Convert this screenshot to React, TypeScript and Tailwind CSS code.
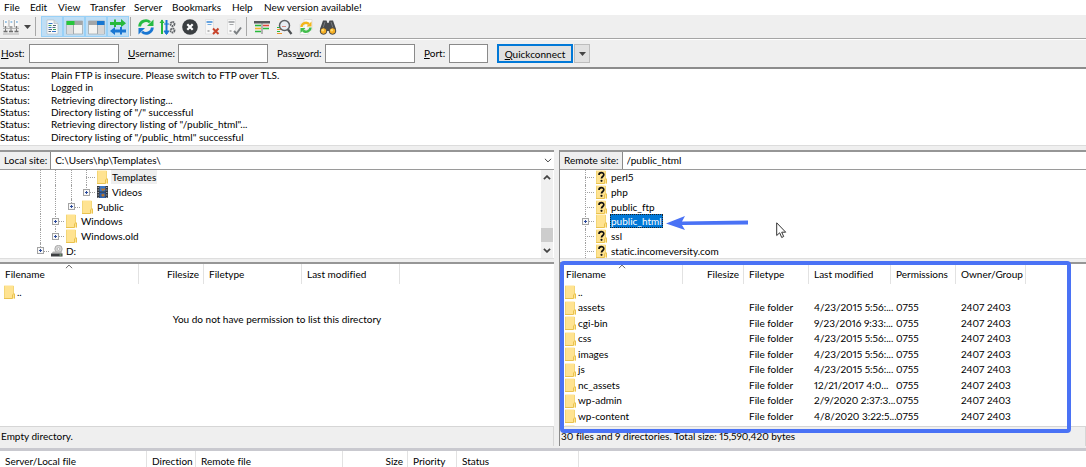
import { type ReactNode } from "react";
import clsx from "clsx";

const LOG_LINES = [
  "Plain FTP is insecure. Please switch to FTP over TLS.",
  "Logged in",
  "Retrieving directory listing...",
  'Directory listing of "/" successful',
  'Retrieving directory listing of "/public_html"...',
  'Directory listing of "/public_html" successful',
];

const REMOTE_FILES = [
  { name: "assets", modified: "4/23/2015 5:56:..." },
  { name: "cgi-bin", modified: "9/23/2016 9:33:..." },
  { name: "css", modified: "4/23/2015 5:56:..." },
  { name: "images", modified: "4/23/2015 5:56:..." },
  { name: "js", modified: "4/23/2015 5:56:..." },
  { name: "nc_assets", modified: "12/21/2017 4:0..." },
  { name: "wp-admin", modified: "2/9/2020 2:37:3..." },
  { name: "wp-content", modified: "4/8/2020 3:22:5..." },
];

/* ---------- icons ---------- */

function FolderIcon({ unknown = false }: { unknown?: boolean }) {
  return (
    <svg width="11" height="14" viewBox="0 0 11 14" className="shrink-0">
      <path d="M0 .5h9.500v8.500h1.500v4.500H0z" fill="#ffe391" />
      <path d="M.5 1v12M9.500 1v8" stroke="#f3d677" fill="none" />
      <path d="M0 13.500h8.500V10l1.500-1.500.5.500v4.500" stroke="#e9c24f" fill="none" />
      {unknown && (
        <g>
          <path
            d="M3 5c0-3 4.800-3 4.800-.3C7.800 6.500 5.500 6.500 5.500 8.600"
            stroke="#111"
            strokeWidth="1.700"
            fill="none"
          />
          <circle cx="5.500" cy="10.800" r="1.100" fill="#111" />
        </g>
      )}
    </svg>
  );
}

function VideosIcon() {
  return (
    <svg width="11" height="12" viewBox="0 0 11 12" className="shrink-0">
      <path d="M0 0h11v12H0z" fill="#33363d" />
      <path d="M2.500 0h6v5.500h-6z" fill="#3b76c4" />
      <path d="M2.500 6.500h6V12h-6z" fill="#2f62ad" />
      <path d="M4 2l2 1 2-1v2L5 5zM4 9l2-1.500 2 1.500-2 2z" fill="#b8742d" />
      <path d="M1.200 1v11M9.800 1v11" stroke="#c9cdd4" strokeDasharray="1 1.500" />
    </svg>
  );
}

function DriveIcon() {
  return (
    <svg width="12" height="12" viewBox="0 0 12 12" className="shrink-0">
      <circle cx="7.500" cy="4" r="3.700" fill="#d6d6d6" stroke="#9c9c9c" strokeWidth=".8" />
      <circle cx="7.500" cy="4" r="1.300" fill="#fff" stroke="#999" strokeWidth=".6" />
      <path d="M2 6.500h8l1.500 2H.5z" fill="#b4b4b4" />
      <path d="M0 8.500h11.500v3H0z" fill="#3d3f42" />
      <path d="M8.500 10h2" stroke="#9de09d" />
    </svg>
  );
}

function ServersIcon() {
  return (
    <svg width="18" height="18" viewBox="0 0 18 18">
      {[0.5, 6, 11.5].map((x) => (
        <g key={x}>
          <path d={`M${x + 1} 2h4v7h-4z`} fill="#fafafa" />
          <path d={`M${x + 1} 2v7h4`} stroke="#9f9f9f" strokeWidth=".8" fill="none" />
          <path d={`M${x + 2.500} 4h1.800`} stroke="#3f8fd0" />
          <path d={`M${x + 3} 8v5`} stroke="#7a7a7a" />
          <path d={`M${x + 1} 13.500h4`} stroke="#6e6e6e" strokeWidth="1.600" />
        </g>
      ))}
      <path d="M1 10.500h16M1 16h16" stroke="#a4a4a4" strokeWidth=".8" />
    </svg>
  );
}

function LogIcon() {
  return (
    <svg width="16" height="18" viewBox="0 0 16 18" className="shrink-0">
      <path d="M3 2h7l4 3.500V16H3z" fill="#fafafa" stroke="#b9c3ca" strokeWidth=".8" />
      <path d="M10 2v3.500h4" fill="#d5dde3" stroke="#b9c3ca" strokeWidth=".8" />
      <path d="M4.500 5.500h4M4.500 9.500h3M8 13.500h4" stroke="#3474c9" />
      <path d="M4.500 7.500h3M9 11.500h3" stroke="#3ba657" />
      <path d="M4.500 11.500h3.500M4.500 13.500h2.500M9 7.500h3M8.500 9.500h3" stroke="#50677d" />
    </svg>
  );
}

function PanelIcon({ side }: { side: "left" | "right" }) {
  const left = side === "left";
  return (
    <svg width="17" height="16" viewBox="0 0 17 16" className="shrink-0">
      <path d="M.5 2h16v13H.5z" fill="#f3f3f1" stroke="#a2a9ad" strokeWidth=".8" />
      <path d="M.5 2h16v4H.5z" fill="#a3a6a8" />
      {left ? (
        <g>
          <path d="M.5 2h8v4h-8z" fill="#27c63b" />
          <path d="M1 6h6v8.500H1z" fill="#dcdcdc" />
        </g>
      ) : (
        <g>
          <path d="M9 2h7.500v4H9z" fill="#1677d2" />
          <path d="M10 6h6v8.500h-6z" fill="#d6d6d6" />
        </g>
      )}
      <path d={left ? "M7.500 6v9" : "M9.500 6v9"} stroke="#a2a9ad" />
    </svg>
  );
}

function QueueIcon() {
  return (
    <svg width="18" height="18" viewBox="0 0 18 18" className="shrink-0">
      <path d="M1 4h4V1.500h2V4h5V1l5 4.300-5 4V7H7v2H5V7H1z" fill="#27b93b" />
      <path d="M17 11.500h-4V9h-2v2.500H6V9l-5 4 5 4v-2.500h5v2h2v-2h4z" fill="#1976d2" />
    </svg>
  );
}

function RefreshIcon() {
  return (
    <svg width="18" height="18" viewBox="0 0 18 18">
      <path d="M2.600 8.500A6.300 6.300 0 0 1 13 4.200" fill="none" stroke="#27bb43" strokeWidth="2.800" />
      <path d="M16.500 1.500v6.500H10z" fill="#27bb43" />
      <path d="M15.400 9.500A6.300 6.300 0 0 1 5 13.800" fill="none" stroke="#1976d2" strokeWidth="2.800" />
      <path d="M1.500 16.500V10H8z" fill="#1976d2" />
    </svg>
  );
}

function ProcessIcon() {
  return (
    <svg width="18" height="18" viewBox="0 0 18 18">
      <path d="M3 2v14" stroke="#27b93b" strokeWidth="2" />
      <path d="M.5 5L3 1.500 5.500 5z" fill="#27b93b" />
      <path d="M7.500 2v14" stroke="#1976d2" strokeWidth="2" />
      <path d="M5 13l2.500 3.500L10 13zM5 6h5" fill="#1976d2" stroke="#1976d2" />
      <circle cx="13.500" cy="6" r="2" fill="none" stroke="#606468" strokeWidth="1.800" strokeDasharray="1.600 .5" />
      <circle cx="13.500" cy="12.500" r="2" fill="none" stroke="#606468" strokeWidth="1.800" strokeDasharray="1.600 .5" />
    </svg>
  );
}

function CancelIcon() {
  return (
    <svg width="18" height="18" viewBox="0 0 18 18">
      <circle cx="9" cy="9" r="7.800" fill="#3b3f42" />
      <path d="M6.300 6.300l5.400 5.400M11.700 6.300l-5.400 5.400" stroke="#fff" strokeWidth="2.200" />
    </svg>
  );
}

function ServerActionIcon({ action }: { action: "disconnect" | "reconnect" }) {
  const off = action === "disconnect";
  return (
    <svg width="18" height="18" viewBox="0 0 18 18">
      <path d="M2.500 1.500h8V16h-8z" fill="#f8f8f8" stroke="#dedede" strokeWidth=".8" />
      <path d="M3.500 4h6" stroke={off ? "#1976d2" : "#85898c"} strokeWidth="1.300" />
      <path d="M4.500 6.500h4" stroke={off ? "#6ea9df" : "#a5a8aa"} />
      <path d="M4.500 13h2" stroke="#777" />
      {off ? (
        <path d="M10 10.500l5.500 5.500M15.500 10.500L10 16" stroke="#c8432b" strokeWidth="2" />
      ) : (
        <path d="M9 13l2.500 2.500 4.500-6" fill="none" stroke="#7c8083" strokeWidth="2" />
      )}
    </svg>
  );
}

function FilterIcon() {
  return (
    <svg width="18" height="18" viewBox="0 0 18 18">
      <path d="M1 3h16v2.500H1z" fill="#56595c" />
      <path d="M2 7.500h6" stroke="#27b93b" strokeWidth="1.600" />
      <path d="M10 7.500h6" stroke="#e0483c" strokeWidth="1.600" />
      <path d="M2 10.500h6" stroke="#f0b429" strokeWidth="1.600" />
      <path d="M10 10.500h6M2 13.500h6" stroke="#27b93b" strokeWidth="1.600" />
      <path d="M9 5v11" stroke="#777" />
    </svg>
  );
}

function CompareIcon() {
  return (
    <svg width="18" height="18" viewBox="0 0 18 18">
      <path d="M2 9.500h3M2 13.500h3" stroke="#27b93b" strokeWidth="1.200" />
      <path d="M2 11.500h4M2 15.500h5" stroke="#f0932b" strokeWidth="1.200" />
      <circle cx="9.500" cy="7.500" r="5" fill="#e8eef2" stroke="#5c6063" strokeWidth="1.500" />
      <path d="M7 8.500h4" stroke="#d68c81" />
      <path d="M13 11.500l3.500 4.500" stroke="#4b4f52" strokeWidth="2.200" />
    </svg>
  );
}

function SyncIcon() {
  return (
    <svg width="18" height="18" viewBox="0 0 18 18">
      <path d="M7 1.500h8V12H7zM3 6h8v10.500H3z" fill="#fbfbfb" stroke="#dadada" strokeWidth=".8" />
      <path d="M4.500 9A4.500 4.500 0 0 1 12 6" fill="none" stroke="#f3b51c" strokeWidth="2.400" />
      <path d="M14.500 3.500v5H9.500z" fill="#f3b51c" />
      <path d="M13.500 9.500A4.500 4.500 0 0 1 6 12.500" fill="none" stroke="#41bd4b" strokeWidth="2.400" />
      <path d="M3.500 15v-5h5z" fill="#41bd4b" />
    </svg>
  );
}

function BinocularsIcon() {
  return (
    <svg width="18" height="18" viewBox="0 0 18 18">
      <path d="M4 2.500h3.500L8.500 5h1l1-2.500H14l3 8.500v3l-7-1H8l-7 1v-3z" fill="#484b4e" />
      <path d="M6 4L4 10M12 4l2 6" stroke="#777b7e" />
      <circle cx="4.500" cy="13" r="3.300" fill="#f5ae22" stroke="#47494b" />
      <circle cx="13.500" cy="13" r="3.300" fill="#f5ae22" stroke="#47494b" />
      <circle cx="3.800" cy="12.300" r="1.200" fill="#ffdc73" />
      <circle cx="12.800" cy="12.300" r="1.200" fill="#ffdc73" />
    </svg>
  );
}

function Chevron({ up = false, bold = false, className }: { up?: boolean; bold?: boolean; className?: string }) {
  return (
    <svg width="8" height="5" viewBox="0 0 8 5" className={className}>
      <path
        d={up ? "M.9 4.200L4 1.100l3.100 3.100" : "M.9.8L4 3.900 7.100.8"}
        fill="none"
        stroke="currentColor"
        strokeWidth={bold ? 1.7 : 1}
      />
    </svg>
  );
}

function DropArrow() {
  return (
    <svg width="7" height="4" viewBox="0 0 7 4">
      <path d="M0 0h7L3.500 4z" fill="#444" />
    </svg>
  );
}

/* ---------- top bars ---------- */

function MenuBar() {
  const item = "h-[15px] leading-[15px]";
  return (
    <nav className="flex h-[15px] items-center gap-[11px] bg-white pl-1">
      <button className={clsx(item, "w-[15px] text-left")}>File</button>
      <button className={clsx(item, "w-[17px] text-left")}>Edit</button>
      <button className={clsx(item, "w-[21px] text-left")}>View</button>
      <button className={clsx(item, "w-[33px] text-left")}>Transfer</button>
      <button className={clsx(item, "w-[27px] text-left")}>Server</button>
      <button className={clsx(item, "w-[49px] text-left")}>Bookmarks</button>
      <button className={clsx(item, "w-[21px] text-left")}>Help</button>
      <button className={clsx(item, "whitespace-nowrap")}>New version available!</button>
    </nav>
  );
}

function ToolButton({
  label,
  active = false,
  children,
}: {
  label: string;
  active?: boolean;
  children: ReactNode;
}) {
  return (
    <button
      aria-label={label}
      className={clsx(
        "flex h-[21px] w-[22px] items-center justify-center",
        active && "border border-[#99d1f7] bg-[#bfdef5]",
      )}
    >
      {children}
    </button>
  );
}

function Toolbar() {
  const separator = "h-[19px] w-px bg-[#a8a8a8]";
  return (
    <div className="flex h-6 items-center border-b border-[#a5a5a5] bg-[#efefef]">
      <ToolButton label="Site Manager">
        <ServersIcon />
      </ToolButton>
      <button aria-label="Saved sites" className="flex h-[21px] w-[13px] items-center justify-start pl-[2px]">
        <DropArrow />
      </button>
      <div className={clsx(separator, "mr-[5px]")} />
      <ToolButton label="Message log" active>
        <LogIcon />
      </ToolButton>
      <ToolButton label="Local tree" active>
        <PanelIcon side="left" />
      </ToolButton>
      <ToolButton label="Remote tree" active>
        <PanelIcon side="right" />
      </ToolButton>
      <ToolButton label="Transfer queue" active>
        <QueueIcon />
      </ToolButton>
      <div className={clsx(separator, "ml-px mr-1")} />
      <ToolButton label="Refresh">
        <RefreshIcon />
      </ToolButton>
      <ToolButton label="Process queue">
        <ProcessIcon />
      </ToolButton>
      <ToolButton label="Cancel">
        <CancelIcon />
      </ToolButton>
      <ToolButton label="Disconnect">
        <ServerActionIcon action="disconnect" />
      </ToolButton>
      <ToolButton label="Reconnect">
        <ServerActionIcon action="reconnect" />
      </ToolButton>
      <div className={clsx(separator, "ml-px mr-1")} />
      <ToolButton label="Filter">
        <FilterIcon />
      </ToolButton>
      <ToolButton label="Compare">
        <CompareIcon />
      </ToolButton>
      <ToolButton label="Synchronized browsing">
        <SyncIcon />
      </ToolButton>
      <ToolButton label="Search">
        <BinocularsIcon />
      </ToolButton>
    </div>
  );
}

function QuickConnect() {
  const field = "h-[19px] w-[90px] border border-[#8a8a8a] bg-white px-1 outline-none";
  return (
    <form
      className="flex h-[30px] items-center border-b-2 border-t border-b-[#8c8c8c] border-t-white bg-[#efefef] pl-px"
      onSubmit={(e) => e.preventDefault()}
    >
      <label htmlFor="host" className="w-7 whitespace-nowrap">
        <u>H</u>ost:
      </label>
      <input id="host" className={field} />
      <label htmlFor="user" className="ml-[9px] w-[50px] whitespace-nowrap">
        <u>U</u>sername:
      </label>
      <input id="user" className={field} />
      <label htmlFor="pass" className="ml-[9px] w-12 whitespace-nowrap">
        Pass<u>w</u>ord:
      </label>
      <input id="pass" type="password" className={field} />
      <label htmlFor="port" className="ml-[9px] w-[25px] whitespace-nowrap">
        <u>P</u>ort:
      </label>
      <input id="port" className="h-[19px] w-[39px] border border-[#8a8a8a] bg-white px-1 outline-none" />
      <button
        type="submit"
        className="ml-[9px] h-[19px] w-[76px] whitespace-nowrap border-2 border-[#0078d7] bg-[#e1e1e1] leading-[14px]"
      >
        <u>Q</u>uickconnect
      </button>
      <button
        type="button"
        aria-label="Quickconnect history"
        className="ml-px flex h-[19px] w-4 items-center justify-center border border-[#bdbdbd] bg-[#e1e1e1]"
      >
        <DropArrow />
      </button>
    </form>
  );
}

function MessageLog() {
  return (
    <div className="border-b border-[#dcdcdc] bg-white pb-[2px]">
      <ul className="grid h-[74px] grid-rows-6">
        {LOG_LINES.map((line) => (
          <li key={line} className="flex items-center leading-3">
            <span className="w-[51px] shrink-0">Status:</span>
            <span>{line}</span>
          </li>
        ))}
      </ul>
    </div>
  );
}

/* ---------- site panes ---------- */

function AddressBar({ id, label, path, chevron }: { id: string; label: string; path: string; chevron?: boolean }) {
  return (
    <div className="flex h-5 border-b border-t-2 border-b-[#9a9a9a] border-t-[#969696] bg-[#efefef]">
      <label
        htmlFor={id}
        className="flex items-center whitespace-nowrap border-r border-[#8a8a8a] pl-1 pr-[3px]"
      >
        {label}
      </label>
      <div className="relative flex-1 bg-white">
        <select id={id} className="h-full w-full appearance-none bg-white pl-1 outline-none">
          <option>{path}</option>
        </select>
        {chevron && <Chevron className="pointer-events-none absolute right-[2px] top-[6px] text-[#444]" />}
      </div>
    </div>
  );
}

const GUIDE_WIDTHS = ["w-[15px]", "w-4", "w-[15px]"];

function TreeRow({
  depth = 0,
  expandable = false,
  last = false,
  icon,
  name,
  highlight,
}: {
  depth?: number;
  expandable?: boolean;
  last?: boolean;
  icon: ReactNode;
  name: string;
  highlight?: "muted" | "selected";
}) {
  return (
    <li className="flex min-h-0 items-center">
      {GUIDE_WIDTHS.slice(0, depth).map((width, i) => (
        <span key={i} className={clsx("self-stretch border-l border-dotted border-[#a0a0a0]", width)} />
      ))}
      <span className="relative w-[11px] shrink-0 self-stretch">
        <span
          className={clsx(
            "absolute left-0 top-0 border-l border-dotted border-[#a0a0a0]",
            last ? "h-1/2" : "h-full",
          )}
        />
        <span className="absolute left-0 top-1/2 w-[9px] border-t border-dotted border-[#a0a0a0]" />
        {expandable && (
          <svg width="7" height="7" viewBox="0 0 7 7" className="absolute -left-[3px] top-1 z-10">
            <rect x=".5" y=".5" width="6" height="6" fill="#f8f8f8" stroke="#a3a3a3" />
            <path d="M2 3.500h3M3.500 2v3" stroke="#2b4a9b" />
          </svg>
        )}
      </span>
      <span className="flex w-[14px] shrink-0">{icon}</span>
      <span
        className={clsx(
          "whitespace-nowrap px-px leading-[14px]",
          highlight === "muted" && "bg-[#efefef]",
          highlight === "selected" && "bg-[#0078d7] text-white outline-1 -outline-offset-1 outline-dotted outline-[#222]",
        )}
      >
        {name}
      </span>
    </li>
  );
}

function LocalTree() {
  return (
    <div className="flex h-[88px] bg-white">
      <ul className="grid flex-1 grid-rows-6 overflow-hidden pl-10">
        <TreeRow depth={3} icon={<FolderIcon />} name="Templates" highlight="muted" />
        <TreeRow depth={3} expandable last icon={<VideosIcon />} name="Videos" />
        <TreeRow depth={2} expandable last icon={<FolderIcon />} name="Public" />
        <TreeRow depth={1} expandable icon={<FolderIcon />} name="Windows" />
        <TreeRow depth={1} expandable last icon={<FolderIcon />} name="Windows.old" />
        <TreeRow expandable last icon={<DriveIcon />} name="D:" />
      </ul>
      <div className="mr-px flex w-3 flex-col items-center bg-[#f0f0f0] py-[5px] text-[#444]">
        <Chevron up bold />
        <div className="mb-1 mt-auto h-[14px] w-full bg-[#cdcdcd]" />
        <Chevron bold className="mt-[2px]" />
      </div>
    </div>
  );
}

function RemoteTree() {
  return (
    <div className="relative h-[88px] bg-white">
      <ul className="grid h-full grid-rows-6 overflow-hidden pl-[25px]">
        <TreeRow icon={<FolderIcon unknown />} name="perl5" />
        <TreeRow icon={<FolderIcon unknown />} name="php" />
        <TreeRow icon={<FolderIcon unknown />} name="public_ftp" />
        <TreeRow expandable icon={<FolderIcon />} name="public_html" highlight="selected" />
        <TreeRow icon={<FolderIcon unknown />} name="ssl" />
        <TreeRow icon={<FolderIcon unknown />} name="static.incomeversity.com" />
      </ul>
      {/* Callout arrow and mouse pointer */}
      <svg width="84" height="14" viewBox="0 0 84 14" className="absolute left-[106px] top-[46px]">
        <path d="M0 7.500L19 0l-3 5.500L82 4.500v4L16 9l3 5z" fill="#4a72f5" />
      </svg>
      <svg width="12" height="17" viewBox="0 0 12 17" className="absolute left-[216px] top-[52px]">
        <path d="M.7.8v12.700l3-2.700 2 4.700 2-1-2-4.300h4z" fill="#fff" stroke="#333" />
      </svg>
    </div>
  );
}

function Th({ children, right, sorted }: { children?: ReactNode; right?: boolean; sorted?: boolean }) {
  return (
    <th
      className={clsx(
        "relative h-5 whitespace-nowrap border-r border-[#e2e2e2] p-0 font-normal",
        right ? "pr-1 text-right" : "pl-[5px] text-left",
      )}
    >
      {sorted && <Chevron up className="absolute left-1/2 top-0 -ml-1 text-[#666]" />}
      {children}
    </th>
  );
}

function LocalList() {
  return (
    <div className="min-h-0 flex-1 overflow-hidden bg-white">
      <table className="w-[400px] table-fixed border-separate border-spacing-0">
        <colgroup>
          <col className="w-[139px]" />
          <col className="w-[65px]" />
          <col className="w-[98px]" />
          <col className="w-[98px]" />
        </colgroup>
        <thead>
          <tr>
            <Th sorted>Filename</Th>
            <Th right>Filesize</Th>
            <Th>Filetype</Th>
            <Th>Last modified</Th>
          </tr>
        </thead>
        <tbody>
          <tr className="h-4">
            <td className="p-0 pl-1">
              <span className="flex items-center gap-[2px] leading-[15px]">
                <FolderIcon />
                ..
              </span>
            </td>
          </tr>
        </tbody>
      </table>
      <p className="pt-3 text-center">You do not have permission to list this directory</p>
    </div>
  );
}

function RemoteRow({ name, modified }: { name: string; modified?: string }) {
  return (
    <tr className="odd:h-4 even:h-[15px]">
      <td className="p-0 pl-1">
        <span className="flex items-center gap-[2px] whitespace-nowrap leading-[15px]">
          <FolderIcon />
          {name}
        </span>
      </td>
      <td className="p-0" />
      <td className="whitespace-nowrap p-0 pl-[5px] leading-[15px]">{modified && "File folder"}</td>
      <td className="whitespace-nowrap p-0 pl-[5px] leading-[15px]">{modified}</td>
      <td className="p-0 pl-[5px] leading-[15px]">{modified && "0755"}</td>
      <td className="p-0 pl-[5px] leading-[15px]">{modified && "2407 2403"}</td>
    </tr>
  );
}

function RemoteList() {
  return (
    <div className="min-h-0 flex-1 overflow-hidden bg-white pl-px">
      <table className="w-[465px] table-fixed border-separate border-spacing-0">
        <colgroup>
          <col className="w-[122px]" />
          <col className="w-[61px]" />
          <col className="w-[65px]" />
          <col className="w-[82px]" />
          <col className="w-[65px]" />
          <col className="w-[70px]" />
        </colgroup>
        <thead>
          <tr>
            <Th sorted>Filename</Th>
            <Th right>Filesize</Th>
            <Th>Filetype</Th>
            <Th>Last modified</Th>
            <Th>Permissions</Th>
            <Th>Owner/Group</Th>
          </tr>
        </thead>
        <tbody>
          <RemoteRow name=".." />
          {REMOTE_FILES.map((file) => (
            <RemoteRow key={file.name} name={file.name} modified={file.modified} />
          ))}
          <RemoteRow name="" />
        </tbody>
      </table>
    </div>
  );
}

function StatusBar({ children }: { children: ReactNode }) {
  return (
    <div className="flex h-5 shrink-0 items-center whitespace-nowrap border-r border-t border-[#d6d6d6] bg-[#efefef] pl-px">
      {children}
    </div>
  );
}

function Splitter() {
  return <div className="h-[6px] shrink-0 border-b-2 border-t border-b-[#969696] border-t-[#dedede] bg-[#efefef]" />;
}

function QueueHeader() {
  return (
    <div className="h-[19px] shrink-0 overflow-hidden border-t-[3px] border-[#c9c9cf] bg-white">
      <table className="w-[579px] table-fixed border-separate border-spacing-0">
        <colgroup>
          <col className="w-[147px]" />
          <col className="w-[49px]" />
          <col className="w-[147px]" />
          <col className="w-[65px]" />
          <col className="w-[49px]" />
          <col className="w-[122px]" />
        </colgroup>
        <thead>
          <tr>
            <Th>Server/Local file</Th>
            <Th>Direction</Th>
            <Th>Remote file</Th>
            <Th right>Size</Th>
            <Th>Priority</Th>
            <Th>Status</Th>
          </tr>
        </thead>
      </table>
    </div>
  );
}

export default function App() {
  return (
    <div className="flex h-screen flex-col overflow-hidden bg-[#efefef] font-['Lato','Open_Sans',sans-serif] text-[10px] leading-[15px] text-black proportional-nums [font-feature-settings:'liga'_0]">
      <MenuBar />
      <Toolbar />
      <QuickConnect />
      <MessageLog />
      <main className="mt-1 grid min-h-0 flex-1 grid-cols-[554fr_527fr] gap-[5px] pb-[2px]">
        <section className="flex min-h-0 min-w-0 flex-col">
          <AddressBar id="local" label="Local site:" path="C:\Users\hp\Templates\" chevron />
          <LocalTree />
          <Splitter />
          <LocalList />
          <StatusBar>Empty directory.</StatusBar>
        </section>
        <section className="flex min-h-0 min-w-0 flex-col border-l border-[#8a8a8a]">
          <AddressBar id="remote" label="Remote site:" path="/public_html" />
          <RemoteTree />
          <Splitter />
          <div className="relative flex min-h-0 flex-1 flex-col">
            <RemoteList />
            <StatusBar>30 files and 9 directories. Total size: 15,590,420 bytes</StatusBar>
            {/* Highlight frame round the listing */}
            <div className="pointer-events-none absolute -top-[3px] bottom-[13px] left-0 right-[15px] rounded-[4px] border-4 border-[#4a72f5]" />
          </div>
        </section>
      </main>
      <QueueHeader />
    </div>
  );
}
